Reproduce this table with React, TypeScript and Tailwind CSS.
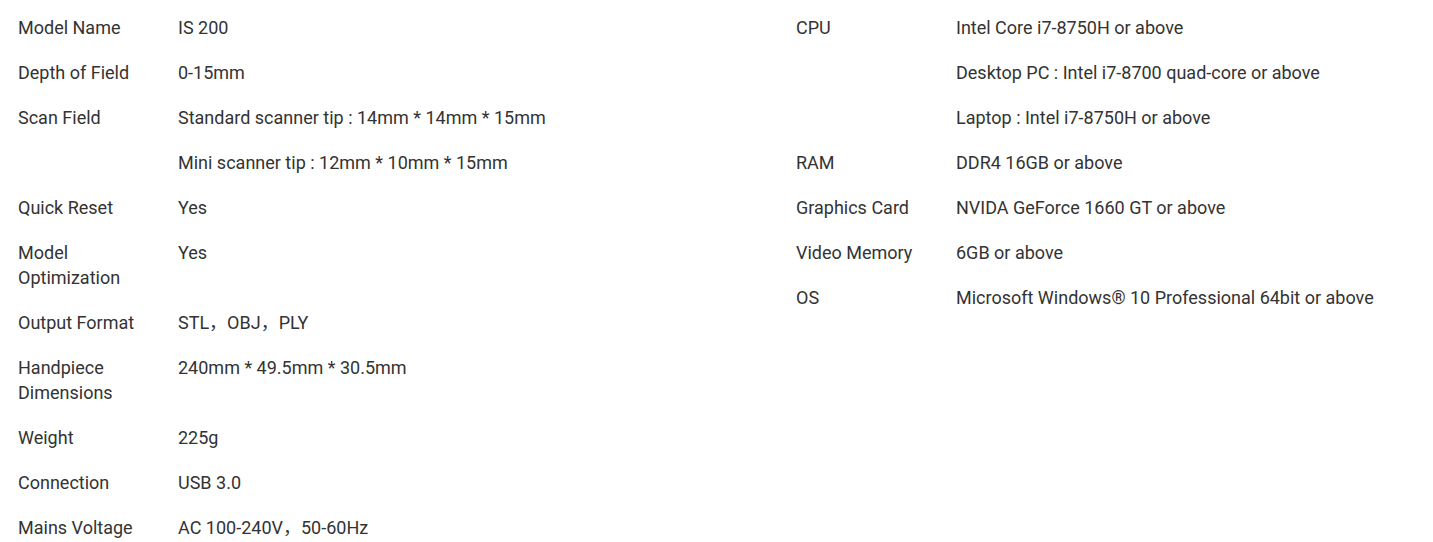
import React from "react";

type Spec = { label: string; values: string[] };

const leftSpecs: Spec[] = [
  { label: "Model Name", values: ["IS 200"] },
  { label: "Depth of Field", values: ["0-15mm"] },
  {
    label: "Scan Field",
    values: [
      "Standard scanner tip : 14mm * 14mm * 15mm",
      "Mini scanner tip : 12mm * 10mm * 15mm",
    ],
  },
  { label: "Quick Reset", values: ["Yes"] },
  { label: "Model Optimization", values: ["Yes"] },
  { label: "Output Format", values: ["STL，OBJ，PLY"] },
  { label: "Handpiece Dimensions", values: ["240mm * 49.5mm * 30.5mm"] },
  { label: "Weight", values: ["225g"] },
  { label: "Connection", values: ["USB 3.0"] },
  { label: "Mains Voltage", values: ["AC 100-240V，50-60Hz"] },
];

const rightSpecs: Spec[] = [
  {
    label: "CPU",
    values: [
      "Intel Core i7-8750H or above",
      "Desktop PC : Intel i7-8700 quad-core or above",
      "Laptop : Intel i7-8750H or above",
    ],
  },
  { label: "RAM", values: ["DDR4 16GB or above"] },
  { label: "Graphics Card", values: ["NVIDA GeForce 1660 GT or above"] },
  { label: "Video Memory", values: ["6GB or above"] },
  { label: "OS", values: ["Microsoft Windows® 10 Professional 64bit or above"] },
];

const SpecTable = ({ specs }: { specs: Spec[] }) => (
  <div className="flex flex-col">
    {specs.map((spec) => (
      <div key={spec.label} className="flex">
        <div className="w-[160px] shrink-0 py-[10px] pr-[30px]">{spec.label}</div>
        <div className="flex flex-col">
          {spec.values.map((v) => (
            <div key={v} className="py-[10px]">
              {v}
            </div>
          ))}
        </div>
      </div>
    ))}
  </div>
);

export default function App() {
  return (
    <div
      className="bg-white w-[1433px] h-[542px] overflow-hidden pl-[18px] pt-[5px] text-[18px] leading-[25px] text-[#333]"
      style={{ fontFamily: "Roboto, 'Noto Sans CJK SC', sans-serif" }}
    >
      <div className="flex">
        <div className="w-[778px] shrink-0">
          <SpecTable specs={leftSpecs} />
        </div>
        <div className="flex-1">
          <SpecTable specs={rightSpecs} />
        </div>
      </div>
    </div>
  );
}
